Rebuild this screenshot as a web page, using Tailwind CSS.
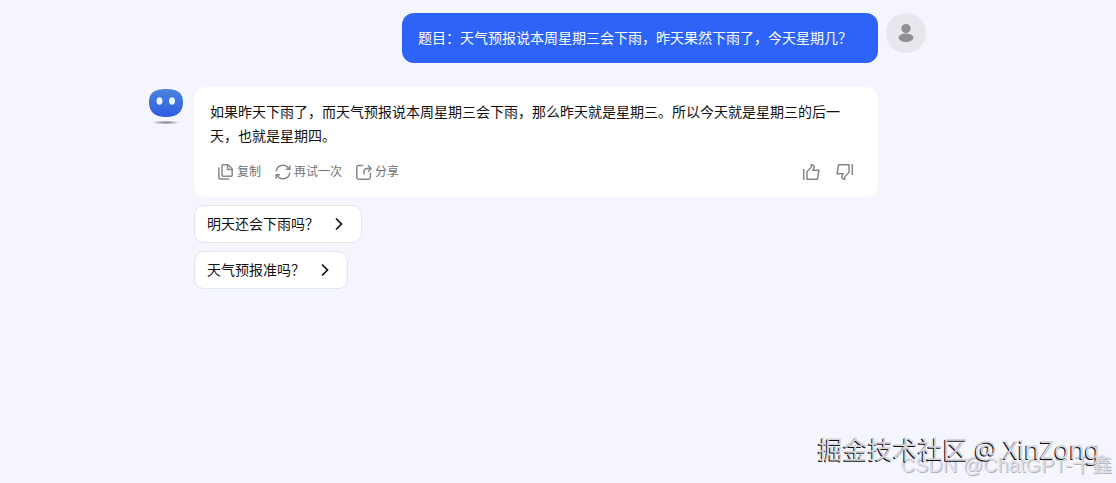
<!DOCTYPE html>
<html lang="zh-CN">
<head>
    <meta charset="UTF-8">
    <meta name="viewport" content="width=device-width, initial-scale=1.0">
    <title>对话</title>
    <script src="https://cdn.jsdelivr.net/npm/@tailwindcss/browser@4"></script>
</head>
<body class="relative min-h-screen overflow-x-hidden bg-[#f4f5fd] font-['Liberation_Sans','Noto_Sans_CJK_SC',sans-serif] text-sm text-[#111111]">
    <main class="pr-11 pt-[13px]">
        <div class="mx-auto flex max-w-[780px] flex-col gap-6">
            <!-- Question -->
            <div class="flex items-start justify-end gap-2">
                <p class="rounded-xl bg-[#2d64f7] py-[13px] pl-4 pr-[26px] leading-6 text-white">题目：天气预报说本周星期三会下雨，昨天果然下雨了，今天星期几？</p>
                <div class="flex size-10 shrink-0 items-center justify-center rounded-full bg-[#e7e8ed]">
                    <svg class="size-5" viewBox="0 0 20 20" fill="#8d8f94">
                        <circle cx="10" cy="5.6" r="4.6"/>
                        <ellipse cx="10" cy="14.8" rx="7.4" ry="4.2"/>
                    </svg>
                </div>
            </div>

            <!-- Answer -->
            <div class="flex items-start gap-2 pr-12">
                <svg class="h-10 w-10 shrink-0" viewBox="0 0 40 40">
                    <defs>
                        <linearGradient id="bot-face" x1="0" y1="0" x2="0" y2="1">
                            <stop offset="0" stop-color="#4b84dc"/>
                            <stop offset="1" stop-color="#2d5be3"/>
                        </linearGradient>
                        <radialGradient id="bot-shadow">
                            <stop offset="0" stop-color="#85868c"/>
                            <stop offset="0.5" stop-color="#b3b4bb"/>
                            <stop offset="1" stop-color="#d5d6de" stop-opacity="0"/>
                        </radialGradient>
                    </defs>
                    <path d="M20 2c12 0 17 4 17 13s-5 15-17 15S3 24 3 15 8 2 20 2z" fill="url(#bot-face)"/>
                    <ellipse cx="13.5" cy="14" rx="3" ry="3.8" fill="#e8f1ff"/>
                    <ellipse cx="26" cy="14" rx="3" ry="3.8" fill="#e8f1ff"/>
                    <ellipse cx="20" cy="35.5" rx="15" ry="2" fill="url(#bot-shadow)"/>
                </svg>
                <div class="min-w-0 flex-1">
                    <div class="rounded-xl bg-white py-[13px]">
                        <p class="pl-4 pr-[26px] leading-6">如果昨天下雨了，而天气预报说本周星期三会下雨，那么昨天就是星期三。所以今天就是星期三的后一天，也就是星期四。</p>
                        <div class="mt-3 flex items-center justify-between px-6 text-xs text-[#6f7275]">
                            <div class="flex items-center gap-[14px]">
                                <button class="flex h-6 items-center gap-[3px]">
                                    <svg class="size-4" viewBox="0 0 16 16" fill="none" stroke="#85888c" stroke-width="1.5" stroke-linejoin="round">
                                        <path d="M5 .8h5l4.200 4.200v6.200q0 1-1 1H5q-1 0-1-1V1.800q0-1 1-1z"/>
                                        <path d="M9.600.8v4.600h4.600"/>
                                        <path d="M.9 3.500v10.600q0 1 1 1h9.300"/>
                                    </svg>
                                    复制
                                </button>
                                <button class="flex h-6 items-center gap-[3px]">
                                    <svg class="size-4" viewBox="0 0 16 16" fill="none" stroke="#85888c" stroke-width="1.5">
                                        <path d="M1.200 7.500A6.700 6.700 0 0 1 13.800 4.800M14.800 1.500v3.800H11"/>
                                        <path d="M14.800 8.500A6.700 6.700 0 0 1 2.200 11.200M1.200 14.500v-3.800H5"/>
                                    </svg>
                                    再试一次
                                </button>
                                <button class="flex h-6 items-center gap-[3px]">
                                    <svg class="size-4" viewBox="0 0 16 16" fill="none" stroke="#85888c" stroke-width="1.5">
                                        <path d="M7.200 1.500H2.500Q.8 1.500.8 3.200v10.300q0 1.700 1.700 1.700h10.200q1.700 0 1.700-1.700V8.500"/>
                                        <path d="M8 10.500V8.200q0-3.700 3.700-3.700h3M12 1.200l3 3.300-3 3.200"/>
                                    </svg>
                                    分享
                                </button>
                            </div>
                            <div class="flex items-center gap-4">
                                <button class="flex h-6 items-center" aria-label="赞">
                                    <svg class="size-[18px]" viewBox="0 0 18 18" fill="none" stroke="#85888c" stroke-width="1.5">
                                        <path d="M1.700 6v11"/>
                                        <path d="M5 16.200V8.500L9.200 4.500V1.700h1.400l1.700 2L11 7.200h5.900l-1.500 9z"/>
                                    </svg>
                                </button>
                                <button class="flex h-6 items-center" aria-label="踩">
                                    <svg class="size-[18px]" viewBox="0 0 18 18" fill="none" stroke="#85888c" stroke-width="1.5">
                                        <path d="M16.300 1v11"/>
                                        <path d="M13 1.800v7.700L8.800 13.500v2.800H7.400l-1.700-2L7 10.800H1.100l1.500-9z"/>
                                    </svg>
                                </button>
                            </div>
                        </div>
                    </div>

                    <!-- Follow-up questions -->
                    <div class="mt-2 flex flex-col items-start gap-2">
                        <button class="flex h-[38px] items-center gap-3 rounded-[10px] border border-[#e3e5ec] bg-white pl-3 pr-[14px]">
                            明天还会下雨吗？
                            <svg class="size-4" viewBox="0 0 16 16" fill="none" stroke="#111111" stroke-width="1.7">
                                <path d="M5 2.500 10.500 8 5 13.500"/>
                            </svg>
                        </button>
                        <button class="flex h-[38px] items-center gap-3 rounded-[10px] border border-[#e3e5ec] bg-white pl-3 pr-[14px]">
                            天气预报准吗？
                            <svg class="size-4" viewBox="0 0 16 16" fill="none" stroke="#111111" stroke-width="1.7">
                                <path d="M5 2.500 10.500 8 5 13.500"/>
                            </svg>
                        </button>
                    </div>
                </div>
            </div>
        </div>
    </main>

    <!-- Watermarks -->
    <p class="absolute bottom-1 right-1 whitespace-nowrap text-xl leading-7 text-[#dfe0e6] [text-shadow:1px_1px_0_#b4b5bb]">CSDN @ChatGPT-千鑫</p>
    <p class="absolute bottom-4 right-4 whitespace-nowrap font-['Noto_Sans','Noto_Sans_CJK_SC',sans-serif] text-[25px] leading-9 text-[#d4d5da] [text-shadow:-1px_1px_0_#111111]">掘金技术社区 @ XinZong</p>
</body>
</html>
